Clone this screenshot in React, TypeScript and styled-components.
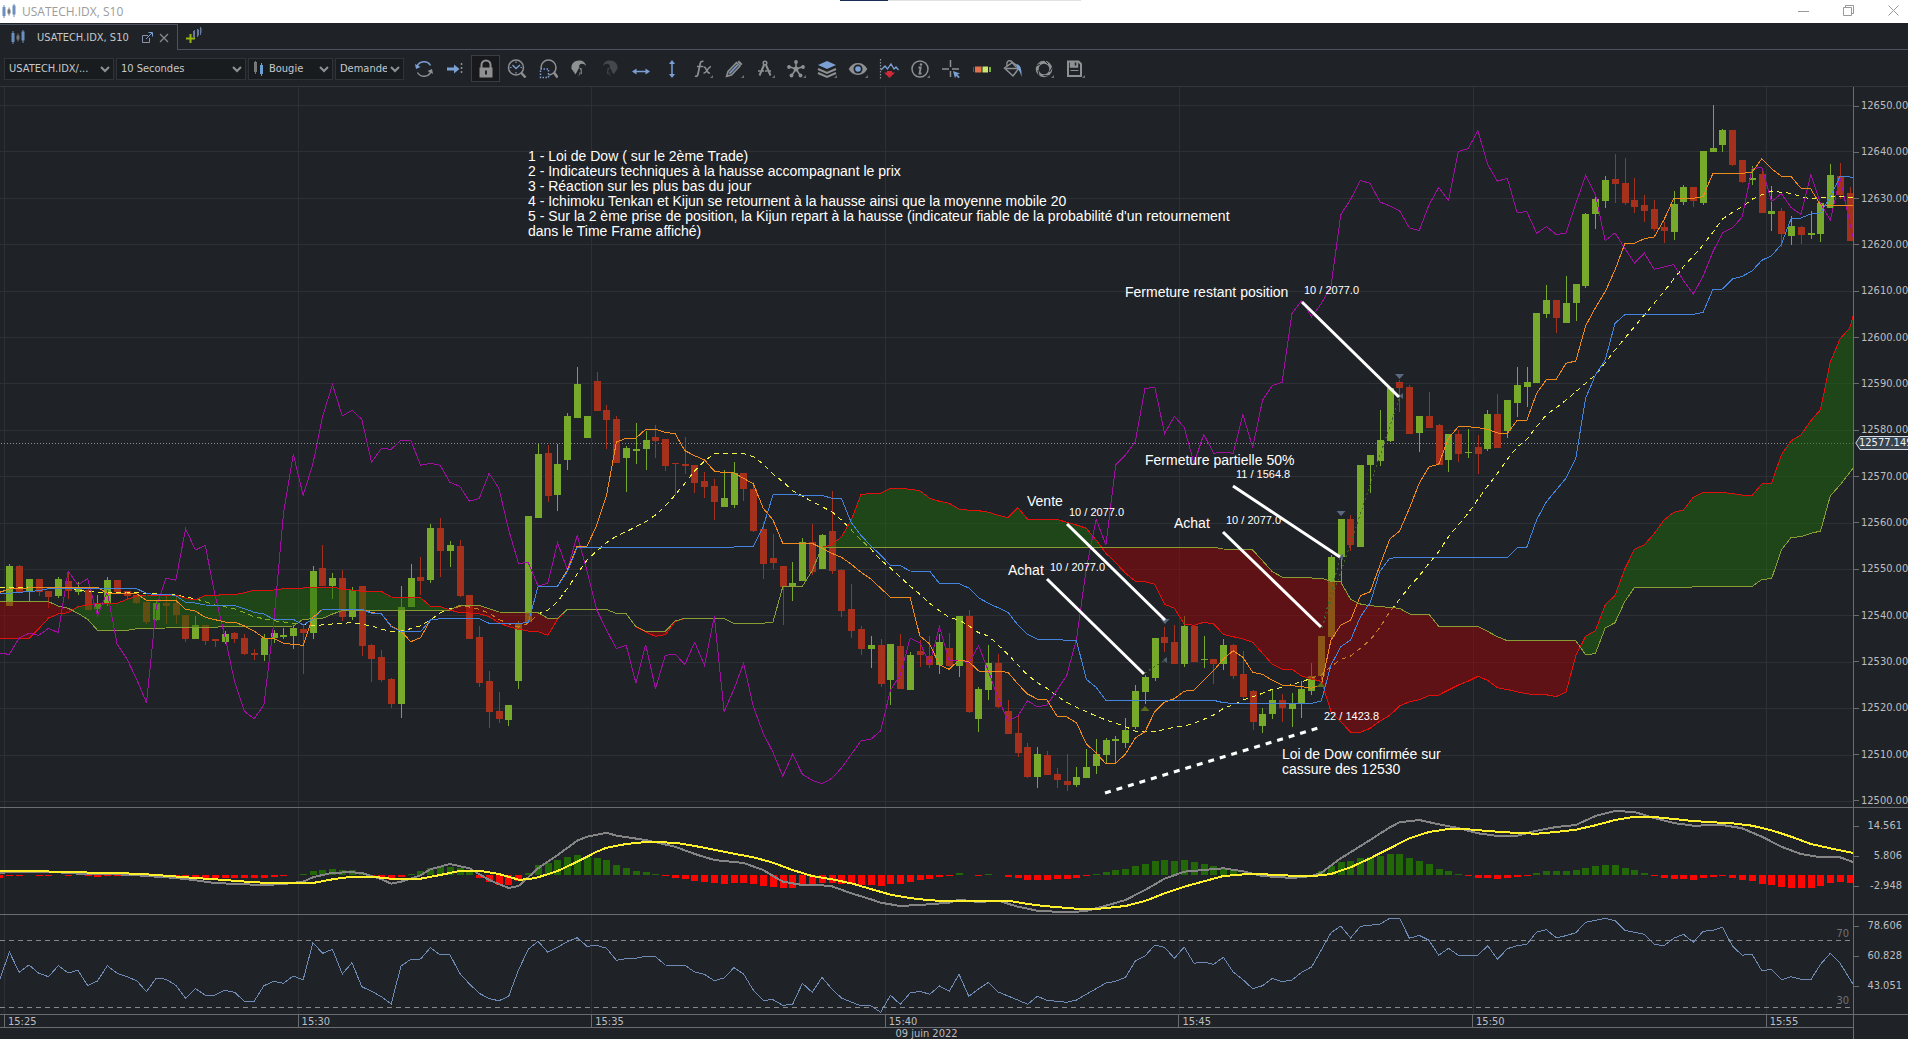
import React from "react";
import styled, { createGlobalStyle } from "styled-components";

/* ---------- theme ---------- */

const c = {
  bg: "#1f2226",
  field: "#191c1f",
  fieldEdge: "#303438",
  edge: "#6a6c6f",
  tabEdge: "#4c5160",
  grid: "#2d3035",
  text: "#c4c8cc",
  axis: "#bcbec1",
  up: "#77a92a",
  down: "#a5301c",
  icon: "#8e9092",
  blue: "#7ba0d4",
};

const uiFont = `"DejaVu Sans Condensed", "Noto Sans", sans-serif`;
const noteFont = `"Liberation Sans", Arial, sans-serif`;

const Global = createGlobalStyle`
  * { box-sizing: border-box; }
  body { margin: 0; background: ${c.bg}; overflow: hidden; }
  button, select { font: inherit; color: inherit; }
`;

/* ---------- market data ---------- */

const PLOT_W = 1853;
const STEP = 9.79;
const xAt = (i: number) => 9.4 + STEP * i;

type Pt = [number, number];

// A run lists "index level" pairs; levels count down from `top` in 1/per pixels.
const run = (top: number, per: number, pairs: string): Pt[] =>
  pairs
    .trim()
    .split(",")
    .map((p) => {
      const [i, v] = p.trim().split(/\s+/).map(Number);
      return [i, top + v / per] as Pt;
    });

const tenkan: Pt[] = [
  ...run(340, 3, "-1 757,0 747,1 745,4 742,9 742,10 760,12 759,13 761,14 781,17 781,18 808,19 813,20 832,22 846,23 846,24 858,25 873,26 894,27 895,28 910,30 916,31 832,32 808,36 808,37 818,38 821,39 858,40 874,41 905,42 893,43 840,44 836,48 836,49 850,52 850,53 848,54 739,56 739,57 690,58 618,59 619,60 555,61 465,62 306,63 295,64 294,65 268,66 268,67 277,68 281,69 332,70 347,71 360,72 393,73 398,74 399,75 415,76 432,77 505,78 540,79 610,82 610,83 625,84 640,85 652,86 673,87 697,88 717,89 745,90 772,92 772,93 888,94 912,95 975,96 988,97 960,98 965"),
  ...run(440, 3, "99 693,101 694,102 697,103 732,104 762,105 777,106 780,107 828,108 831,109 848,110 912,111 938,112 972,113 970,114 942,115 894,116 875,117 815,118 786,119 776,120 754,121 750,122 721,123 692,124 657,125 632,126 652,127 697,128 703,129 721,130 735,131 737,132 740,133 745,134 735,135 600,136 555,137 541,138 467,139 455,140 375,141 297,142 273,143 205"),
  ...run(240, 3, "144 730,145 680,146 673,147 595,148 560,149 560,150 563,151 568,152 579,153 580,154 541,155 541,156 460,157 419,158 418,159 370,160 363,161 258"),
  ...run(90, 3, "162 653,163 605,164 540,165 461,166 460,167 446,168 441,169 390,170 326,172 325,173 320,174 250,177 250,178 247,179 206,180 236,181 259,182 260,183 295,184 297,185 345,187 346,188.4 348"),
];

const kijun: Pt[] = [
  ...run(340, 3, "-1 762,3 752,4 746,13 746,14 760,15 764,16 762,17 767,18 787,19 789,20 795,23 797,24 806,25 817,26 822,27 838,29 838,30 855,31 838,32 808,36 808,37 820,38 821,39 860,40 874,42 875,43 840,44 836,48 836,49 850,52 850,53 848,54 739,56 739,57 695,58 622,73 622,75 620,76 619,77 560,78 464,83 466,84 475,85 476,86 548,87 587,88 617,89 646,90 676,91 677,92 693,94 694,95 730,97 731,98 744"),
  ...run(440, 3, "99 473,100 490,102 517,103 555,104 583,105 598,107 599,109 602,110 718,111 742,112 781,123 781,124 788,125 790,133 790,134 783,135 675,136 620,137 600,138 530,139 488,140 393,141 355,142 352"),
  ...run(240, 3, "153 953,154 923,155 921,156 840,157 785,158 750,159 715,160 655"),
  ...run(90, 3, "161 925,162 855,163 810,164 700,165 674,172 673,173 667,174 598,175 597,176 567,177 559,178 543,179 511,180 497,181 463,182 385,183 384,184 372,185 369,186 320,187 259,188.4 262"),
];

const average: Pt[] = [
  ...run(340, 3, "-1 742,3 742,6 743,8 755,10 758,12 757,14 760,17 764,18 772,19 776,21 795,23 806,25 830,27 842,29 850,31 857,33 852,35 848,37 858,39 876,40 873,41 866,42 857,43 840,44 818,45 806,46 800,47 801,48 808,49 820,50 838,51 852,52 861,53 850,54 822,55 810,56 785,57 745,58 702,59 660,60 633,61 608,62 588,63 575,64 560,65 545,66 525,67 498,68 465,69 430,70 392,71 363,72 341,75 341,76 350,77 372,78 402,79 425,80 452,81 468,82 485,83 500,84 515,85 540,86 570,87 600,88 627,89 660,90 684,91 712,92 738,93 763,94 790,95 812,96 832,97 840,98 857,99 878"),
  ...run(440, 3, "100 588,101 615,102 643,103 675,104 705,105 728,106 745,107 768,108 787,109 802,110 815,111 828,112 840,113 850,114 860,115 873,117 876,118 868,119 862,120 858,121 850,122 838,123 825,124 805,125 795,126 780,127 770,128 760,129 748,130 742,131 733,132 725,133 715,134 705,135 680,136 658,137 648,138 625,139 600,140 562,141 515,142 478,143 440,144 408,145 370,146 335,147 290"),
  ...run(240, 3, "148 855,149 820,150 778,151 738,152 700,153 658,154 622,155 598,156 560,157 524,158 503,159 480,160 455,161 430"),
  ...run(90, 3, "162 855,163 818,164 780,165 745,166 710,167 675,168 640,169 605,170 567,171 530,172 498,173 465,174 427,175 387,176 367,177 350,178 328,179 314,180 303,181 307,182 310,183 320,184 326,186 321,187 320,188.4 322"),
];

const chikou: Pt[] = [
  ...run(340, 3, "-1 940,0 943,1 893,2 880,3 886,4 865,5 878,6 694,7 734,8 716,9 828,10 755,11 912,12 957,13 1018,14 1089,15 800,16 714,17 721,18 566,19 630,20 616,21 764,22 888,23 1025,24 1114,25 1136,26 1095,27 850,28 520,29 343,30 466,31 372,32 228,33 134,34 228,35 211,36 238,37 367,38 325,39 328,40 301,41 301,42 376,43 370,44 376,45 427,46 439,47 484,48 475,49 400,50 445,51 570,52 670,53 668,54 738,55 730,56 608,57 690,58 586,59 692,60 810,61 870,62 926,63 916,64 1030,65 914,66 1046,67 946,68 943,69 973,70 907,71 976,72 829,73 1115,74 1048,75 970,76 1100,77 1180,78 1237,79 1309,80 1243,81 1303,82 1321,83 1331,84 1315,85 1284,86 1243,87 1202,88 1198,89 1172,90 1050,91 1005,92 895,93 908,94 972,95 860,96 963,97 960,98 968"),
  ...run(440, 3, "99 617,100 693,101 775,102 843,103 828,104 782,105 801,106 795,107 750,108 707,109 598,110 385,111 238,112 315,113 75,114 45,115 5"),
  ...run(110, 2.2725, "116 633,117 630,118 735,119 696,120 721,121 803,122 737,123 780,124 778,125 780,126 692,127 767,128 660,129 626,130 619,131 463,132 433,133 470,134 440,135 400,136 238,137 203,138 160,139 167,140 209,141 218,142 229,143 268,144 274,145 216,146 176,147 206,148 94,149 88,150 47,151 124,152 162,153 155,154 233,155 231,156 280,157 265,158 283,159 280,160 213,161 149,162 192,163 297,164 279,165 314,166 348,167 325,168 362,169 357,170 351,171 388,172 418,173 378,174 322,175 279,176 268,177 243,178 134,179 130,180 208,181 190,182 222,183 237,184 147,185 212,186 250,187 154,188.4 298"),
];

const spanA: Pt[] = [
  ...run(340, 3, "-1 895,2 895,3 866,4 834,5 822,6 818,7 800,8 795,9 790,11 790,12 778,13 768,14 765,17 765,18 775,19 780,20 766,23 764,24 758,25 751,27 750,28 746,30 744,33 742,34 747,36 754,38 754,39 771,42 773,43 799,44 800,45 810,46 818,47 819,48 821,49 830,50 848,51 860,52 868,53 873,54 875,55 886,56 838,57 808,61 808,62 821,63 821,64 860,65 876,66 889,67 884,68 845,69 835,73 836,74 850,77 850,78 846,79 740,81 739,82 692,83 622,84 614,85 590,86 540,87 463,88 461,89 460,90 445,91 445,92 448,93 452,94 475,95 484,96 490,97 507,98 511"),
  ...run(440, 3, "99 212,100 217,101 226,102 233,103 203,104 238,107 238,108 247,109 255,110 265,111 300,112 340,113 368,114 400,115 424,116 425,117 433,118 493,119 505,120 552,121 556,122 547,123 552,124 583,125 590,126 597,127 607,128 640,129 673,130 687,131 688,132 708,133 717,134.1 725,134.4 760,135 815,136 845,137 877,138 877,139 865,140 843,141 826,142 798,143 785,144 779,145 767,146 765,147 750"),
  ...run(110, 2.2725, "148 1307,149 1298,150 1287,151 1296,152 1313,153 1317,155 1327,157 1329,158 1333,159 1323,160 1240,161 1196,162 1183,163 1125,164 1103,165 1043,166 998,167 988,168 963,169 932,170 914,171 909,172 880,173 869,175 869,177 875,178 876,179 850,180 848,181 783,182 752,183 738,184 706,185 681,186 573,187 520,188 495,188.4 462"),
];

const spanB: Pt[] = [
  ...run(340, 3, "-1 785,4 785,5 798,6 805,7 820,8 838,9 871,12 871,13 866,16 864,17 862,19 862,29 858,30 838,32 835,33 822,34 812,36 811,44 812,45 810,46 796,48 796,49 806,50 816,54 818,55 835,56 835,57 808,61 808,62 821,63 821,64 860,65 874,67 874,68 843,69 835,73 836,74 850,77 850,78 846,79 740,81 739,82 692,83 622,99 622"),
  ...run(440, 3, "123 322,124 327,126 329,127 330,128 362,129 395,130 411,134 415,135 424,136 426,137 478,138 492,139 497,142 505,143 522,145 523,146 559"),
  ...run(110, 2.2725, "150 1174,151 1185,152 1197,153 1206,160 1206,161 1238,162 1235,163 1177,164 1165,165 1117,166 1085,178 1083,179 1067,180 1065,181 1000,182 971,183 970,184 962,185 957,186 877,187 852,188.4 812"),
];

const macd = run(790, 3, "-1 248,2 245,5 247,8 253,11 253,13 256,17 264,19 271,21 279,24 283,26 285,28 282,30 275,31 262,33 248,35 247,36 249,38 268,39 281,40 275,42 256,43 238,45 222,47 235,49 270,51 294,52 288,54 235,56 195,58 152,59 140,61 128,62 137,65 150,68 170,70 192,72 210,74 216,75 219,77 240,79 275,81 285,83 286,84 289,86 310,88 328,89 338,91 348,94 343,96 338,97 329,99 336,101 332,103 350,105 362,108 367,110 363,112 347,114 330,116 300,118 266,120 245,122 240,124 235,126 244,128 258,131 264,133 258,134 248,136 205,139 150,141 112,142 97,144 90,146 103,148 114,150 130,152 138,154 137,156 122,158 111,160 105,162 78,164 63,166 66,168 84,170 99,172 107,175 105,177 115,179 140,181 170,183 192,185 202,187 202,188.4 217");
const signal = run(790, 3, "-1 242,3 243,5 246,9 248,13 251,16 257,19 264,22 270,25 277,28 280,31 279,33 268,35 260,37 260,39 266,42 266,44 255,46 243,48 242,50 252,52 269,53 268,54 262,56 243,58 215,60 185,61 173,63 162,65 156,68 158,70 168,72 179,74 191,76 202,78 218,80 240,82 258,84 268,86 280,88 297,90 314,92 324,94 331,96 333,102 332,104 342,106 349,109 356,111 357,114 348,116 333,118 310,120 290,122 274,124 258,127 251,130 256,133 259,135 252,137 232,139 205,141 175,143 145,145 126,147 117,149 118,151 123,154 129,156 131,158 126,160 119,162 106,164 90,166 80,168 81,170 87,172 93,174 97,176 100,178 107,180 121,182 140,184 162,186 175,188.4 189");
const rsi = run(790, 3, "-1 570,0 486,1 547,2 525,3 550,4 560,5 527,6 549,7 541,8 587,9 573,10 527,11 550,12 560,13 572,14 605,15 564,16 568,17 586,18 625,19 596,20 615,21 615,22 601,23 607,24 634,25 634,26 587,27 574,28 580,29 558,30 570,31 458,32 490,33 478,34 552,35 518,36 590,37 604,38 620,39 642,40 528,41 508,42 507,43 473,44 495,45 494,46 550,47 582,48 610,49 626,50 632,51 619,52 540,53 478,54 454,55 487,56 472,57 455,58 443,59 469,60 466,61 475,62 511,63 506,64 505,65 499,66 500,67 525,69 526,70 546,71 553,72 572,73 564,74 533,75 552,76 601,77 631,78 629,79 646,80 643,81 580,82 607,83 562,84 597,85 624,86 636,87 648,88 647,89 667,90 616,91 643,92 609,93 604,94 613,95 588,96 604,97 553,98 619,99 597,100 577,101 606,102 618,103 630,104 643,105 619,106 631,107 634,108 637,109 630,110 613,111 596,112 579,113 574,114 562,115 513,116 498,117 465,118 472,119 505,120 471,121 520,122 516,123 523,124 502,125 546,126 569,127 596,128 587,129 565,130 575,131 570,132 547,133 531,134 480,135 428,136 408,137 444,138 409,139 406,140 402,141 385,142 385,143 445,144 436,145 451,146 496,147 475,148 496,150 496,151 467,152 508,153 476,154 467,155 463,156 426,157 419,158 443,159 437,160 428,161 397,162 391,163 385,164 392,165 421,166 427,167 433,168 463,169 467,170 445,171 433,172 457,173 424,174 421,175 412,176 468,177 496,178 492,179 542,180 538,181 569,182 560,183 568,184 569,185 523,186 490,187 520,188.3 582");

// Histogram heights by candle, starting at index -1; negative is below zero.
const histogram =
  "-8 -2 -3 0 -2 -2 0 -2 0 -3 -6 -3 -3 -2 0 -2 -2 -3 -4 -5 -6 -8 -9 -9 -9 -9 -9 -9 -6 -3 0 2 12 15 18 15 15 7 -3 -9 -15 -6 3 12 20 24 24 20 10 -9 -21 -30 -30 -18 6 30 36 45 54 60 54 51 45 30 21 12 9 3 -3 -9 -12 -18 -21 -24 -27 -24 -24 -27 -33 -36 -39 -39 -33 -30 -24 -24 -27 -27 -30 -30 -33 -27 -27 -21 -15 -12 -6 -3 6 0 -3 3 0 -6 -10 -15 -15 -15 -12 -12 -9 -3 3 9 15 18 27 33 42 45 43 45 39 33 27 21 15 6 0 -3 -6 -8 -6 -3 0 12 27 39 42 51 54 57 63 63 51 42 33 18 12 3 -3 -9 -9 -12 -9 -6 -3 6 12 12 12 15 21 27 30 30 21 15 6 -3 -9 -12 -12 -15 -9 -6 -3 -9 -15 -18 -27 -30 -36 -39 -39 -39 -33 -24 -21 -24"
    .split(" ")
    .map(Number);

interface Candle {
  i: number;
  rising: boolean;
  top: number;
  bottom: number;
  high: number;
  low: number;
}

// Each entry is direction, body top, body bottom, wick top, wick bottom.
const session = (from: number, top: number, rows: string): Candle[] =>
  rows
    .trim()
    .split(",")
    .map((r, n) => {
      const [a, b, h, l] = r.trim().slice(1).split(" ").map((v) => Math.round(top + Number(v) / 3));
      return { i: from + n, rising: r.trim()[0] === "u", top: a, bottom: b, high: h, low: l };
    });

const candles: Candle[] = [
  ...session(0, 340, "u678 797 672 797,d678 755 675 755,u717 757 717 783,d717 755 717 768,d753 770 753 803,u717 768 711 774,d723 752 700 777,u747 756 726 765,d750 810 744 810,u792 807 765 820,u720 790 711 797,d720 755 720 755,d753 768 753 778,d765 790 765 793,d786 846 786 852,u788 840 780 843,d789 798 768 853,d790 825 770 852,d825 897 825 907,u856 897 828 897,d856 903 856 915,d897 903 897 920,u882 906 873 912,d879 897 876 909,d894 942 882 945,d939 945 927 960,u893 945 882 962,u879 895 870 908,u885 891 864 897,u864 888 855 926,d867 879 855 1002,u693 879 678 896,d684 738 615 738,u714 738 700 777,d714 831 690 843,u750 831 741 840,d738 918 738 948,d915 957 912 1026,d951 1020 930 1026,d1017 1092 1014 1104,u801 1092 738 1134,u714 801 672 801,d711 723 652 766,u564 720 552 729,d564 633 534 711,u615 633 603 682,d618 768 600 771,d766 897 766 897,d891 1029 858 1041,d1023 1116 992 1164,d1113 1137 1056 1149,u1095 1140 1095 1158,u852 1023 843 1047,u528 846 528 846,u342 534 312 534,d339 468 316 486,u372 465 312 513,u228 360 219 390,u132 234 81 234,u228 294 228 294,d123 213 96 213,d210 240 195 327,d237 369 228 369,u324 354 318 456,u327 333 249 372,u300 327 273 390,d291 303 255 354,d297 378 297 392,d369 372 369 465,d372 378 291 402,d375 429 375 459,d423 441 396 474,d438 486 417 540,u474 501 390 501,u399 495 366 504,d399 447 399 483,d447 573 426 576,d567 672 546 717,d654 669 582 687,d678 741 678 855,u729 741 666 783,u606 723 594 723,d606 696 552 705,u585 687 582 687,d573 693 453 702,d690 813 687 831,d807 873 732 894,d867 927 858 945,u915 927 888 984,d915 1032 897 1041,u912 1020 912 1095,d918 1047 882 1047,u945 1050 936 1050,d933 945 900 981,d948 975 888 984,u906 975 882 1002,d924 978 879 981,u828 978 828 1011,d828 1116 810 1119,u1047 1137 1041 1176"),
  ...session(100, 440, "u669 750 615 780,d669 801 642 804,d813 882 780 882,d879 939 822 951,d921 1011 909 1014,u942 1011 921 1044,d945 1005 933 1005,d1002 1020 984 1044,d1023 1035 942 1053,u1011 1035 981 1041,u981 1014 927 1014,u942 978 897 1002,u900 945 894 972,u897 903 888 972,u870 909 834 924,u753 861 735 867,u711 756 705 792,u594 714 594 723,d591 609 561 636,d606 672 555 672,u558 672 528 681,d558 666 558 666,u657 660 588 684,d657 672 657 732,u615 672 597 690,d615 708 612 717,d702 771 633 777,d753 846 750 870,u822 858 804 879,u780 822 747 837,d780 804 762 846,u792 807 759 861,u747 789 723 834,u708 753 669 765,u588 708 588 720,u351 591 345 597,u237 351 237 435,d237 315 225 333,u75 321 75 321"),
  ...session(139, 240, "u645 675 645 759,u600 663 510 678,u444 603 440 606,d426 444 420 516,d441 582 435 582,u528 579 528 636,d528 564 456 564,d555 675 552 675,u582 660 582 696,d582 642 570 666,u636 639 567 654,d621 642 585 702,u522 627 510 633,d522 624 462 624,u480 573 480 594,u435 489 381 531,u426 441 381 501,u219 429 219 429,u180 222 135 234,d180 234 180 279,u189 249 108 249,u132 189 132 243"),
  ...session(161, 90, "u372 588 369 594,u327 372 320 417,u270 333 258 354,d267 282 192 339,d279 339 204 345,d330 351 264 369,d345 363 315 396,d357 417 330 423,d411 423 396 459,u342 426 303 450,u291 336 285 345,d291 333 291 351,u183 339 183 345,u174 186 45 186,u120 165 117 186,d120 225 120 228,d210 276 210 279,u264 270 228 285,d252 369 234 369,u363 372 288 423,d363 432 354 470,u408 438 378 465,d411 435 408 462,u430 435 363 447,u339 432 336 456,u255 354 222 354,d258 315 219 327,d309 453 291 453"),
];

const levelAt = (line: Pt[], i: number) => {
  let k = 1;
  while (k < line.length - 1 && line[k][0] < i) k++;
  const [a, b] = [line[k - 1], line[k]];
  return a[1] + ((b[1] - a[1]) * (i - a[0])) / (b[0] - a[0]);
};

const toPoints = (line: Pt[]) => line.map(([i, y]) => `${xAt(i).toFixed(1)},${y.toFixed(1)}`).join(" ");

const cloud = (pick: (a: number, b: number) => number) => {
  const near: string[] = [];
  const far: string[] = [];
  for (let n = -10; n <= 1884; n++) {
    const i = n / 10;
    const a = levelAt(spanA, i);
    const b = levelAt(spanB, i);
    const x = xAt(i).toFixed(1);
    near.push(`${x},${pick(a, b).toFixed(1)}`);
    far.unshift(`${x},${b.toFixed(1)}`);
  }
  return [...near, ...far].join(" ");
};

const bullCloud = cloud(Math.min);
const bearCloud = cloud(Math.max);

const times = ["15:25", "15:30", "15:35", "15:40", "15:45", "15:50", "15:55"];
const gridX = times.map((_, n) => 4 + Math.round(293.7 * n));
const prices = Array.from({ length: 16 }, (_, n) => 12650 - n * 10);
const gridY = prices.map((_, n) => Math.round(105 + 46.4 * n));

/* ---------- frame ---------- */

const Window = styled.div`
  display: flex;
  flex-direction: column;
  height: 100vh;
  min-height: 480px;
  background: ${c.bg};
  color: ${c.text};
  font-family: ${uiFont};
  font-size: 11px;
  line-height: 12px;
`;

const TitleBar = styled.header`
  position: relative;
  display: flex;
  align-items: center;
  flex: 0 0 23px;
  padding: 0 8px 0 2px;
  gap: 6px;
  background: #fff;
  color: #9b9b9b;
  font-family: "Open Sans", "Noto Sans", sans-serif;
  font-size: 12px;
  svg { display: block; }
`;

const Title = styled.h1`
  flex: 1;
  margin: 0;
  font-size: 12px;
  line-height: 20px;
  font-weight: 400;
`;

const Loading = styled.div`
  position: absolute;
  left: 44%;
  top: 0;
  width: 241px;
  height: 1px;
  background: linear-gradient(to right, #1b2d5b 48px, #e2e2e2 48px);
`;

const WindowControls = styled.div`
  display: flex;
  gap: 31px;
  align-self: flex-start;
  padding: 3px 0 0;
`;

const PlainButton = styled.button`
  display: grid;
  place-items: center;
  padding: 0;
  border: 0;
  background: none;
`;

const WindowButton = styled(PlainButton)`
  width: 14px;
  height: 14px;
`;

const TabBar = styled.nav`
  display: flex;
  flex: 0 0 27px;
`;

const Tab = styled.div`
  display: flex;
  align-items: center;
  width: 178px;
  margin-top: 1px;
  padding-left: 11px;
  border-top: 1px solid ${c.tabEdge};
  border-right: 1px solid ${c.tabEdge};
`;

const TabName = styled.span`
  flex: 1;
  padding-left: 12px;
`;

const TabTools = styled.div`
  display: flex;
  gap: 6px;
  padding-right: 8px;
`;

const TabRest = styled.div`
  display: flex;
  align-items: center;
  flex: 1;
  padding: 0 0 2px 8px;
  border-bottom: 1px solid ${c.tabEdge};
`;

const Toolbar = styled.div`
  display: flex;
  align-items: center;
  flex: 0 0 37px;
  padding: 1px 0 0 4px;
  gap: 2px;
  border-bottom: 1px solid #33373c;
`;

const Field = styled.label<{ $w: number }>`
  position: relative;
  display: flex;
  align-items: center;
  width: ${(p) => p.$w}px;
  height: 22px;
  padding-left: 4px;
  gap: 5px;
  border: 1px solid ${c.fieldEdge};
  background: ${c.field};
`;

const Select = styled.select`
  flex: 1;
  min-width: 0;
  height: 20px;
  padding: 0 16px 0 0;
  border: 0;
  outline: 0;
  appearance: none;
  background: transparent;
`;

const Chevron = styled.svg`
  position: absolute;
  right: 3px;
  top: 7px;
  pointer-events: none;
`;

const Tools = styled.div`
  display: flex;
  gap: 2px;
  padding-left: 3px;
`;

const Tool = styled(PlainButton)<{ $on?: boolean }>`
  width: 29px;
  height: 27px;
  border: 1px solid ${(p) => (p.$on ? "#3a3e42" : "transparent")};
  background: ${(p) => (p.$on ? "#17191c" : "transparent")};
`;

/* ---------- chart layout ---------- */

const Workspace = styled.main`
  display: grid;
  grid-template-columns: minmax(0, 1fr) 55px;
  grid-template-rows: 721fr 107fr 100fr 13px 11px;
  flex: 1;
  min-height: 0;
`;

const Pane = styled.section`
  position: relative;
  min-height: 0;
  border-bottom: 1px solid ${c.edge};
  overflow: hidden;
`;

const Plot = styled.svg`
  display: block;
  width: 100%;
  height: 100%;
`;

const Axis = styled.div<{ $top: number; $bottom: number; $end?: boolean }>`
  position: relative;
  display: flex;
  flex-direction: column;
  justify-content: space-between;
  min-height: 0;
  padding: ${(p) => p.$top}px ${(p) => (p.$end ? 6 : 0)}px ${(p) => p.$bottom}px 0;
  border-left: 1px solid ${c.edge};
  border-bottom: 1px solid ${c.edge};
  color: ${c.axis};
  overflow: hidden;
`;

const AxisMark = styled.div<{ $end?: boolean }>`
  display: flex;
  align-items: center;
  justify-content: ${(p) => (p.$end ? "space-between" : "flex-start")};
  gap: 2px;
  line-height: 12px;
  white-space: nowrap;
  &::before {
    content: "";
    flex: 0 0 5px;
    height: 1px;
    background: ${c.edge};
  }
`;

const PriceTag = styled.div`
  position: absolute;
  left: 1px;
  top: 48.5%;
  width: 60px;
  height: 14px;
  svg { position: absolute; inset: 0; }
  span {
    position: absolute;
    left: 4px;
    top: 1px;
    color: #eef1f4;
  }
`;

const TimeRow = styled.div`
  display: flex;
  padding-left: 4px;
  border-bottom: 1px solid ${c.edge};
  color: ${c.axis};
  overflow: hidden;
`;

const TimeCell = styled.div`
  flex: 0 0 15.88%;
  padding-left: 3px;
  border-left: 1px solid ${c.edge};
  line-height: 13px;
`;

const DateRow = styled.div`
  color: ${c.axis};
  line-height: 11px;
  text-align: center;
`;

const Corner = styled.div`
  border-left: 1px solid ${c.edge};
`;

const Note = styled.p<{ $x: number; $y: number; $small?: boolean }>`
  position: absolute;
  left: ${(p) => (p.$x / PLOT_W) * 100}%;
  top: ${(p) => ((p.$y - 87) / 720) * 100}%;
  margin: 0;
  color: #fff;
  font-family: ${noteFont};
  font-size: ${(p) => (p.$small ? 11 : 14)}px;
  line-height: ${(p) => (p.$small ? 12 : 15)}px;
  white-space: nowrap;
`;

const Level = styled.span<{ $y: number }>`
  position: absolute;
  right: 4px;
  top: ${(p) => p.$y}%;
  color: #6f7275;
`;

/* ---------- icons ---------- */

const CandleIcon = ({ size = 14 }: { size?: number }) => (
  <svg width={size} height="15" viewBox="0 0 14 15" aria-hidden="true">
    <path d="M2 1v13M12 0v13" stroke="#6c8fc0" />
    <path d="M7 3.500v8" stroke="#777" />
    <rect x="0.500" y="3" width="3" height="9" fill="#6c8fc0" />
    <rect x="5.500" y="5.500" width="3" height="4" fill="#777" />
    <rect x="10.500" y="1.500" width="3" height="9" fill="#6c8fc0" />
  </svg>
);

const Glyph = ({ children, more }: { children: React.ReactNode; more?: boolean }) => (
  <svg width="20" height="20" viewBox="0 0 20 20" fill="none" stroke={c.icon} strokeWidth="1.5" aria-hidden="true">
    {children}
    {more && <path d="M20 16v3h-3z" fill="#6d7073" stroke="none" />}
  </svg>
);

const toolIcons: { name: string; icon: React.ReactNode; on?: boolean; more?: boolean }[] = [
  {
    name: "Actualiser",
    icon: (
      <>
        <path d="M3 7.500A7.500 7.500 0 0 1 16.500 6.500" stroke={c.blue} />
        <path d="M17 12.500A7.500 7.500 0 0 1 3.500 13.500" />
        <path d="M1 5l1 5 4.500-2z" fill={c.blue} stroke="none" />
        <path d="M19 15l-1-5-4.500 2z" fill={c.icon} stroke="none" />
      </>
    ),
  },
  {
    name: "Aller à la fin",
    icon: (
      <>
        <path d="M2 8.500h7V5.500l5.500 4.500L9 14.500v-3H2z" fill={c.blue} stroke="none" />
        <path d="M16.500 4v12" strokeDasharray="2 2" />
      </>
    ),
  },
  {
    name: "Verrouiller",
    on: true,
    icon: (
      <>
        <path d="M5.500 9V6a4.500 4.500 0 0 1 9 0v3" strokeWidth="2" />
        <path d="M3.500 8.500h13v10h-13z" fill={c.icon} stroke="none" />
        <path d="M10 11.500v4" stroke="#222" strokeWidth="2" />
      </>
    ),
  },
  {
    name: "Zoom temps",
    icon: (
      <>
        <circle cx="9" cy="8.500" r="7.500" />
        <path d="M14 13.500l4.500 5" strokeWidth="2.500" />
        <path d="M5.500 6l3.500 3.500L13 6" stroke={c.blue} strokeWidth="1.300" />
        <path d="M9 2.500v1.500M9 13v1.500M3 8.500h1.500M13.500 8.500H15" stroke={c.blue} strokeWidth="1.200" />
      </>
    ),
  },
  {
    name: "Zoom zone",
    icon: (
      <>
        <circle cx="10.500" cy="8.500" r="7.500" />
        <path d="M16 13.500l3.500 5" strokeWidth="2.500" />
        <path d="M2.500 10h8v8.500h-8z" fill={c.bg} stroke={c.blue} strokeDasharray="1.500 1.500" />
      </>
    ),
  },
  {
    name: "Annuler",
    icon: (
      <path d="M7 18.500c2.500-1 4-3 3.500-5.500L13 15.500 12.500 9H2.500C2 5 5.500 1.500 10 1.500c4 0 6.500 2 7 5.500-2-2.500-5-3-6.500-1-1 1.500 0 3 1 5 1 3-.5 6-4.500 7.500zM2 9l8 0-3.500 6.500z" fill={c.icon} stroke="none" />
    ),
  },
  {
    name: "Rétablir",
    icon: (
      <path d="M13 18.500c-2.500-1-4-3-3.500-5.500L7 15.500 7.500 9h10C18 5 14.500 1.500 10 1.500c-4 0-6.500 2-7 5.500 2-2.500 5-3 6.500-1 1 1.500 0 3-1 5-1 3 .5 6 4.500 7.500zM18 9l-8 0 3.500 6.500z" fill="#45484b" stroke="none" />
    ),
  },
  {
    name: "Échelle horizontale",
    icon: (
      <>
        <path d="M3 12.500h14" stroke={c.blue} />
        <path d="M1 12.500l4.500-3v6zM19 12.500l-4.500-3v6z" fill={c.blue} stroke="none" />
      </>
    ),
  },
  {
    name: "Échelle verticale",
    icon: (
      <>
        <path d="M10 3v14" stroke={c.blue} />
        <path d="M10 1l-3 4h6zM10 19l-3-4h6z" fill={c.blue} stroke="none" />
      </>
    ),
  },
  {
    name: "Indicateurs",
    more: true,
    icon: (
      <>
        <path d="M10.500 2.500c-2-.8-3 .5-3.400 2.500L5 15c-.4 2-1.500 2.800-3 2M4 7.500h6" strokeWidth="1.700" />
        <path d="M10.500 8c3-1 3 7 6.500 6M18 7.500c-3 0-4 7-7.500 6.500" strokeWidth="1.600" />
      </>
    ),
  },
  {
    name: "Dessiner",
    more: true,
    icon: (
      <>
        <path d="M2.500 17.500l1.500-5 8.500-9 3.500 3.500-8.500 9z" fill="#3c3f43" />
        <path d="M5.500 14.500l8-8.500" stroke={c.blue} />
        <path d="M13.500 3l1.500-1.500 3.500 3.500L17 6.500z" fill={c.icon} stroke="none" />
      </>
    ),
  },
  {
    name: "Géométrie",
    more: true,
    icon: (
      <>
        <circle cx="10" cy="4" r="1.800" />
        <path d="M9 6L4.500 16.500M11 6l4.500 10.500" strokeWidth="2" />
        <path d="M3 12h14" strokeDasharray="2.500 1" />
      </>
    ),
  },
  {
    name: "Liaisons",
    more: true,
    icon: (
      <>
        <path d="M10 10V4M10 10l6-2M10 10l4 6M10 10l-4 6M10 10L4 8" />
        <g fill={c.icon} stroke="none">
          <circle cx="10" cy="10" r="2.500" />
          <circle cx="10" cy="3" r="1.900" />
          <circle cx="17" cy="8" r="1.900" />
          <circle cx="14.500" cy="16.500" r="1.900" />
          <circle cx="5.500" cy="16.500" r="1.900" />
          <circle cx="3" cy="8" r="1.900" />
        </g>
      </>
    ),
  },
  {
    name: "Calques",
    more: true,
    icon: (
      <>
        <path d="M10 2l9 4-9 4-9-4z" fill={c.blue} stroke="none" />
        <path d="M1 10l9 4 9-4M1 14l9 4 9-4" strokeWidth="2" />
      </>
    ),
  },
  {
    name: "Affichage",
    more: true,
    icon: (
      <>
        <path d="M1.500 10c4-7 13-7 17 0-4 7-13 7-17 0z" fill={c.icon} />
        <circle cx="10" cy="10" r="4.500" fill={c.bg} stroke="none" />
        <circle cx="10" cy="10" r="2.800" fill={c.blue} stroke="none" />
      </>
    ),
  },
  {
    name: "Positions",
    icon: (
      <>
        <path d="M1.500 0v20" strokeDasharray="1.500 1.500" strokeWidth="1.200" />
        <path d="M2 11l4-4 2.500 3L12 5l3 5 2-2 2.500 3" stroke={c.blue} strokeWidth="1.300" />
        <path d="M5 13.500h3V12h5v1.500h3L10.500 19z" fill="#d2283a" stroke="none" />
      </>
    ),
  },
  {
    name: "Informations",
    more: true,
    icon: (
      <>
        <circle cx="10" cy="10" r="8" />
        <path d="M8.500 8.500h2.200l-1.200 6h2" strokeWidth="1.800" />
        <circle cx="11" cy="5.500" r="1.300" fill={c.icon} stroke="none" />
      </>
    ),
  },
  {
    name: "Curseur",
    icon: (
      <>
        <path d="M9.500 1v7M9.500 12v6M1 10h7M11 10h7" />
        <path d="M12 12l7 2.500-2.700 1 2.500 2.500-1.300 1.300-2.500-2.500-1 2.700z" fill={c.blue} stroke="none" />
      </>
    ),
  },
  {
    name: "Couleurs",
    icon: (
      <g stroke="none">
        <path d="M1 8h1v5H1z" fill="#a93a22" />
        <path d="M3 7.500h6.500v6H3z" fill="#e2714c" />
        <path d="M10.500 7.500H16v6h-5.500z" fill="#cce86a" />
        <path d="M17 8h2v5h-2z" fill="#7fae34" />
      </g>
    ),
  },
  {
    name: "Remplissage",
    icon: (
      <>
        <path d="M1.500 9l8-5.500 7 5-6.500 8.500z" />
        <path d="M4 7c-1-4 1-6 4-5l5 6M3 9.500h12" />
        <path d="M13.500 5c4 1 5.500 5 5 13-1-4-2-7-5-9z" fill={c.blue} stroke="none" />
      </>
    ),
  },
  {
    name: "Paramètres",
    more: true,
    icon: (
      <>
        <circle cx="10" cy="10" r="6.800" strokeWidth="3" />
        <path d="M10 1l4 4M18.500 8l-3 5M15 17l-5.500-.5M5 16.500L4 11M1.500 7.500L6 5" stroke={c.bg} strokeWidth="1" />
      </>
    ),
  },
  {
    name: "Enregistrer",
    more: true,
    icon: (
      <>
        <path d="M3 2.500h10.500L16 5v12H3z" strokeWidth="2" />
        <path d="M5.500 3h7v5h-7z" fill={c.icon} />
        <path d="M10.500 3.500v3" stroke={c.bg} />
        <path d="M5.500 11.500h8" strokeWidth="1" />
      </>
    ),
  },
];

/* ---------- parts ---------- */

const Picker = ({ name, value, width, icon }: { name: string; value: string; width: number; icon?: React.ReactNode }) => (
  <Field $w={width}>
    {icon}
    <Select aria-label={name} defaultValue={value}>
      <option>{value}</option>
    </Select>
    <Chevron width="10" height="7" viewBox="0 0 10 7" aria-hidden="true">
      <path d="M1 1l4 4 4-4" fill="none" stroke="#8f9295" strokeWidth="2" />
    </Chevron>
  </Field>
);

const VerticalGrid = ({ top, height }: { top: number; height: number }) => (
  <g fill={c.grid}>
    {gridX.map((x) => (
      <rect key={x} x={x} y={top} width="1" height={height} />
    ))}
  </g>
);

const PriceChart = () => (
  <Plot viewBox="0 87 1853 720" preserveAspectRatio="none" shapeRendering="crispEdges" role="img" aria-label="Cours USATECH.IDX">
    <VerticalGrid top={87} height={720} />
    <g fill={c.grid}>
      {gridY.map((y) => (
        <rect key={y} x="0" y={y} width="1853" height="1" />
      ))}
    </g>
    <path d="M1 443.500H1853" stroke="#8d8f92" strokeDasharray="1 2" />
    {candles.map((k) => {
      const x = Math.round(xAt(k.i) - 3.2);
      return (
        <g key={k.i} fill={k.rising ? c.up : c.down}>
          <rect x={x + 3} y={k.high} width="1" height={k.low - k.high} />
          <rect x={x} y={k.top} width="7" height={Math.max(1, k.bottom - k.top)} />
        </g>
      );
    })}
    <g fill="none">
      <polyline points={toPoints(average)} stroke="#f4f43c" strokeDasharray="5 4" />
      <polygon points={bullCloud} fill="#206a0a" fillOpacity="0.500" />
      <polygon points={bearCloud} fill="#a00204" fillOpacity="0.500" />
      <polyline points={toPoints(spanA)} stroke="#e0100d" />
      <polyline points={toPoints(spanB)} stroke="#8a9c34" />
      <polyline points={toPoints(chikou)} stroke="#a010a0" />
      <polyline points={toPoints(tenkan)} stroke="#f08a1c" />
      <polyline points={toPoints(kijun)} stroke="#4484dc" />
      <path d="M1145 673L1165 660M1322 628L1340 558M1322 628L1400 396" stroke="#3f6324" strokeDasharray="2 3" />
    </g>
    <g shapeRendering="geometricPrecision">
      <path d="M1160.500 619h9l-4.500 5zM1336.500 511h9l-4.500 5zM1395 374h9l-4.500 5z" fill="#5b6a80" />
      <path d="M1140.500 711h9l-4.500-5zM1316.500 687h9l-4.500-5z" fill="#5d6a1a" />
      <path d="M1163 660l4-3v6zM1339 557l4-3v6zM1399 396l4-3v6z" fill="#50606e" />
      <path d="M1067 524L1165 620M1047 579L1144 674M1223 532L1321 627M1233 486L1340 557M1302 302L1399 397" stroke="#fff" strokeWidth="3" />
      <path d="M1105 793L1318 728" stroke="#fff" strokeWidth="3" strokeDasharray="6 6" />
    </g>
  </Plot>
);

const MacdChart = () => (
  <Plot viewBox="0 808 1853 106" preserveAspectRatio="none" shapeRendering="crispEdges" role="img" aria-label="MACD">
    <VerticalGrid top={808} height={106} />
    {histogram.map((v, n) => {
      const h = Math.round(Math.abs(v) / 3);
      return (
        h > 0 && (
          <rect key={n} x={Math.round(xAt(n - 1) - 3.2)} y={v > 0 ? 875 - h : 875} width="7" height={h} fill={v > 0 ? "#226806" : "#fb0603"} />
        )
      );
    })}
    <g fill="none" strokeWidth="2">
      <polyline points={toPoints(macd)} stroke="#858585" />
      <polyline points={toPoints(signal)} stroke="#fff02c" />
    </g>
  </Plot>
);

const RsiChart = () => (
  <Plot viewBox="0 915 1853 99" preserveAspectRatio="none" shapeRendering="crispEdges" role="img" aria-label="RSI">
    <VerticalGrid top={915} height={99} />
    <path d="M0 940.500H1853M0 1007.500H1853" stroke="#858789" strokeDasharray="5 4" />
    <polyline points={toPoints(rsi)} fill="none" stroke="#6d8bb4" />
  </Plot>
);

export default function App() {
  return (
    <Window>
      <Global />
      <TitleBar>
        <CandleIcon />
        <Title>USATECH.IDX, S10</Title>
        <Loading />
        <WindowControls>
          <WindowButton aria-label="Réduire">
            <svg width="11" height="11" stroke="#999" fill="none"><path d="M0 6.500h11" /></svg>
          </WindowButton>
          <WindowButton aria-label="Restaurer">
            <svg width="11" height="11" stroke="#999" fill="none"><path d="M.5 2.500h8v8h-8zM2.500 2.500v-2h8v8h-2" /></svg>
          </WindowButton>
          <WindowButton aria-label="Fermer la fenêtre">
            <svg width="11" height="11" stroke="#999" fill="none"><path d="M.5.5l10 10M10.500.5l-10 10" /></svg>
          </WindowButton>
        </WindowControls>
      </TitleBar>

      <TabBar>
        <Tab>
          <CandleIcon />
          <TabName>USATECH.IDX, S10</TabName>
          <TabTools>
            <PlainButton aria-label="Détacher l'onglet">
              <svg width="11" height="11" fill="none" stroke="#8794a8"><path d="M6 3.500H.5v7h7V6" /><path d="M4 7l6-6M6.500.5h4v4" stroke={c.blue} /></svg>
            </PlainButton>
            <PlainButton aria-label="Fermer l'onglet">
              <svg width="10" height="10" fill="none" stroke="#85888b" strokeWidth="1.300"><path d="M1 1l8 8M9 1L1 9" /></svg>
            </PlainButton>
          </TabTools>
        </Tab>
        <TabRest>
          <PlainButton aria-label="Nouveau graphique">
            <svg width="16" height="16" viewBox="0 0 16 16">
              <path d="M8.500 3v8M11.500 2v8M14.500 0v8" stroke="#66799a" />
              <path d="M7 4h2v6H7zM11 2.500h2v6h-2zM14 1h1.500v5H14z" fill="#66799a" />
              <path d="M0 11.500h9M4.500 7v9" stroke="#94b60e" strokeWidth="2" />
            </svg>
          </PlainButton>
        </TabRest>
      </TabBar>

      <Toolbar>
        <Picker name="Instrument" value="USATECH.IDX/..." width={110} />
        <Picker name="Période" value="10 Secondes" width={130} />
        <Picker
          name="Type de graphique"
          value="Bougie"
          width={85}
          icon={
            <svg width="11" height="15" aria-hidden="true">
              <path d="M2.500 0v13" stroke="#777" /><path d="M1 1h3v10H1z" fill="#777" />
              <path d="M8.500 2v13" stroke="#6c9ed6" /><path d="M7 4h3v9H7z" fill="#6c9ed6" />
            </svg>
          }
        />
        <Picker name="Côté du prix" value="Demande" width={69} />
        <Tools>
          {toolIcons.map((t) => (
            <Tool key={t.name} aria-label={t.name} $on={t.on}>
              <Glyph more={t.more}>{t.icon}</Glyph>
            </Tool>
          ))}
        </Tools>
      </Toolbar>

      <Workspace>
        <Pane>
          <PriceChart />
          <Note $x={528} $y={149}>
            1 - Loi de Dow ( sur le 2ème Trade)<br />
            2 - Indicateurs techniques à la hausse accompagnant le prix<br />
            3 - Réaction sur les plus bas du jour<br />
            4 - Ichimoku Tenkan et Kijun se retournent à la hausse ainsi que la moyenne mobile 20<br />
            5 - Sur la 2 ème prise de position, la Kijun repart à la hausse (indicateur fiable de la probabilité d'un retournement<br />
            dans le Time Frame affiché)
          </Note>
          <Note $x={1125} $y={285}>Fermeture restant position</Note>
          <Note $x={1304} $y={284} $small>10 / 2077.0</Note>
          <Note $x={1145} $y={453}>Fermeture partielle 50%</Note>
          <Note $x={1236} $y={468} $small>11 / 1564.8</Note>
          <Note $x={1027} $y={494}>Vente</Note>
          <Note $x={1069} $y={506} $small>10 / 2077.0</Note>
          <Note $x={1174} $y={516}>Achat</Note>
          <Note $x={1226} $y={514} $small>10 / 2077.0</Note>
          <Note $x={1008} $y={563}>Achat</Note>
          <Note $x={1050} $y={561} $small>10 / 2077.0</Note>
          <Note $x={1324} $y={710} $small>22 / 1423.8</Note>
          <Note $x={1282} $y={747}>Loi de Dow confirmée sur<br />cassure des 12530</Note>
        </Pane>
        <Axis $top={13} $bottom={0}>
          {prices.map((p) => (
            <AxisMark key={p}>{p.toFixed(2)}</AxisMark>
          ))}
          <PriceTag>
            <svg width="60" height="14" aria-hidden="true">
              <path d="M60 .5H5L.8 7 5 13.500h55" fill="#3a444f" stroke="#d4dbe2" />
            </svg>
            <span>12577.149</span>
          </PriceTag>
        </Axis>

        <Pane>
          <MacdChart />
        </Pane>
        <Axis $top={12} $bottom={22} $end>
          {["14.561", "5.806", "-2.948"].map((v) => (
            <AxisMark key={v} $end>{v}</AxisMark>
          ))}
        </Axis>

        <Pane>
          <RsiChart />
          <Level $y={13}>70</Level>
          <Level $y={81}>30</Level>
        </Pane>
        <Axis $top={5} $bottom={22} $end>
          {["78.606", "60.828", "43.051"].map((v) => (
            <AxisMark key={v} $end>{v}</AxisMark>
          ))}
        </Axis>

        <TimeRow>
          {times.map((t) => (
            <TimeCell key={t}>{t}</TimeCell>
          ))}
        </TimeRow>
        <Corner />
        <DateRow>09 juin 2022</DateRow>
        <Corner />
      </Workspace>
    </Window>
  );
}
